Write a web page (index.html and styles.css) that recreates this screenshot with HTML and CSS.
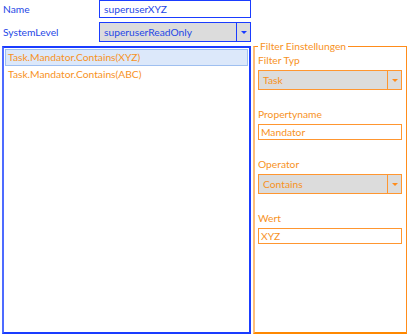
FILE: index.html
```html
<!DOCTYPE html>
<html lang="de">
<head>
    <meta charset="UTF-8">
    <title>Benutzer Filter</title>
    <link rel="stylesheet" href="styles.css">
</head>
<body>
<div class="head">
    <div class="row">
        <span class="label">Name</span>
        <div class="textbox">superuserXYZ</div>
    </div>
    <div class="row">
        <span class="label">SystemLevel</span>
        <div class="combo">
            <span class="combo-text">superuserReadOnly</span>
            <span class="combo-btn"><i class="arrow"></i></span>
        </div>
    </div>
</div>

<div class="main">
    <div class="list">
        <div class="item selected">Task.Mandator.Contains(XYZ)</div>
        <div class="item">Task.Mandator.Contains(ABC)</div>
    </div>

    <fieldset class="filter">
        <legend>Filter Einstellungen</legend>
        <div class="field-label">Filter Typ</div>
        <div class="combo combo-orange">
            <span class="combo-text">Task</span>
            <span class="combo-btn"><i class="arrow"></i></span>
        </div>
        <div class="field-label">Propertyname</div>
        <div class="textbox textbox-orange">Mandator</div>
        <div class="field-label">Operator</div>
        <div class="combo combo-orange">
            <span class="combo-text">Contains</span>
            <span class="combo-btn"><i class="arrow"></i></span>
        </div>
        <div class="field-label">Wert</div>
        <div class="textbox textbox-orange">XYZ</div>
    </fieldset>
</div>
</body>
</html>
```

FILE: styles.css
```css
* {
    margin: 0;
    padding: 0;
    box-sizing: border-box;
}

body {
    width: 410px;
    height: 335px;
    overflow: hidden;
    background: #fff;
    font-family: Lato, "Open Sans", sans-serif;
    font-size: 10.25px;
    color: #1f48e6;
}

/* Kopfbereich */
.head {
    padding-left: 3px;
}

.row {
    display: flex;
    align-items: center;
}

.row + .row {
    margin-top: 4px;
}

.label {
    width: 96px;
}

.textbox {
    width: 152px;
    height: 18px;
    padding-left: 4px;
    line-height: 16px;
    border: 1px solid #1a3cff;
    background: #fff;
}

.combo {
    display: flex;
    width: 152px;
    height: 20px;
    border: 1px solid #1a3cff;
    background: #dcdcdc;
}

.combo-text {
    flex: 1;
    padding-left: 4px;
    line-height: 18px;
}

.combo-btn {
    display: flex;
    align-items: center;
    justify-content: center;
    width: 14px;
    border-left: 1px solid #1a3cff;
}

.arrow {
    width: 0;
    height: 0;
    border-left: 3px solid transparent;
    border-right: 3px solid transparent;
    border-top: 3px solid #1a3cff;
}

/* Liste + Filter */
.main {
    display: flex;
    align-items: flex-start;
    gap: 2px;
    margin-top: -2px;
    padding-left: 2px;
}

.list {
    width: 249px;
    height: 288px;
    margin-top: 6px;
    padding: 1px;
    border: 2px solid #1a3cff;
    border-left-color: #4d6bff;
}

.item {
    height: 17px;
    padding-left: 2px;
    line-height: 15px;
    color: #f7921e;
    border: 1px solid transparent;
}

.item.selected {
    background: #dce8fa;
    border-color: #9ebff0;
}

.filter {
    width: 154px;
    height: 294px;
    padding: 0 3px;
    border: 1px solid #ff8c1a;
    border-left: 2px solid #ffbe7a;
    border-bottom: 2px solid #ff8800;
    color: #f7921e;
}

.filter legend {
    padding: 0 2px;
    line-height: 12px;
}

.field-label {
    height: 16px;
    line-height: 16px;
    margin-bottom: 2px;
}

.combo-orange {
    width: 144px;
    margin-bottom: 16px;
    border-color: #ff9630;
}

.combo-orange .combo-btn {
    border-left-color: #ff9630;
}

.combo-orange .arrow {
    border-top-color: #ff8c1a;
}

.textbox-orange {
    width: 144px;
    height: 16px;
    line-height: 14px;
    margin-bottom: 16px;
    border-color: #ff9630;
    padding-left: 2px;
}
```
